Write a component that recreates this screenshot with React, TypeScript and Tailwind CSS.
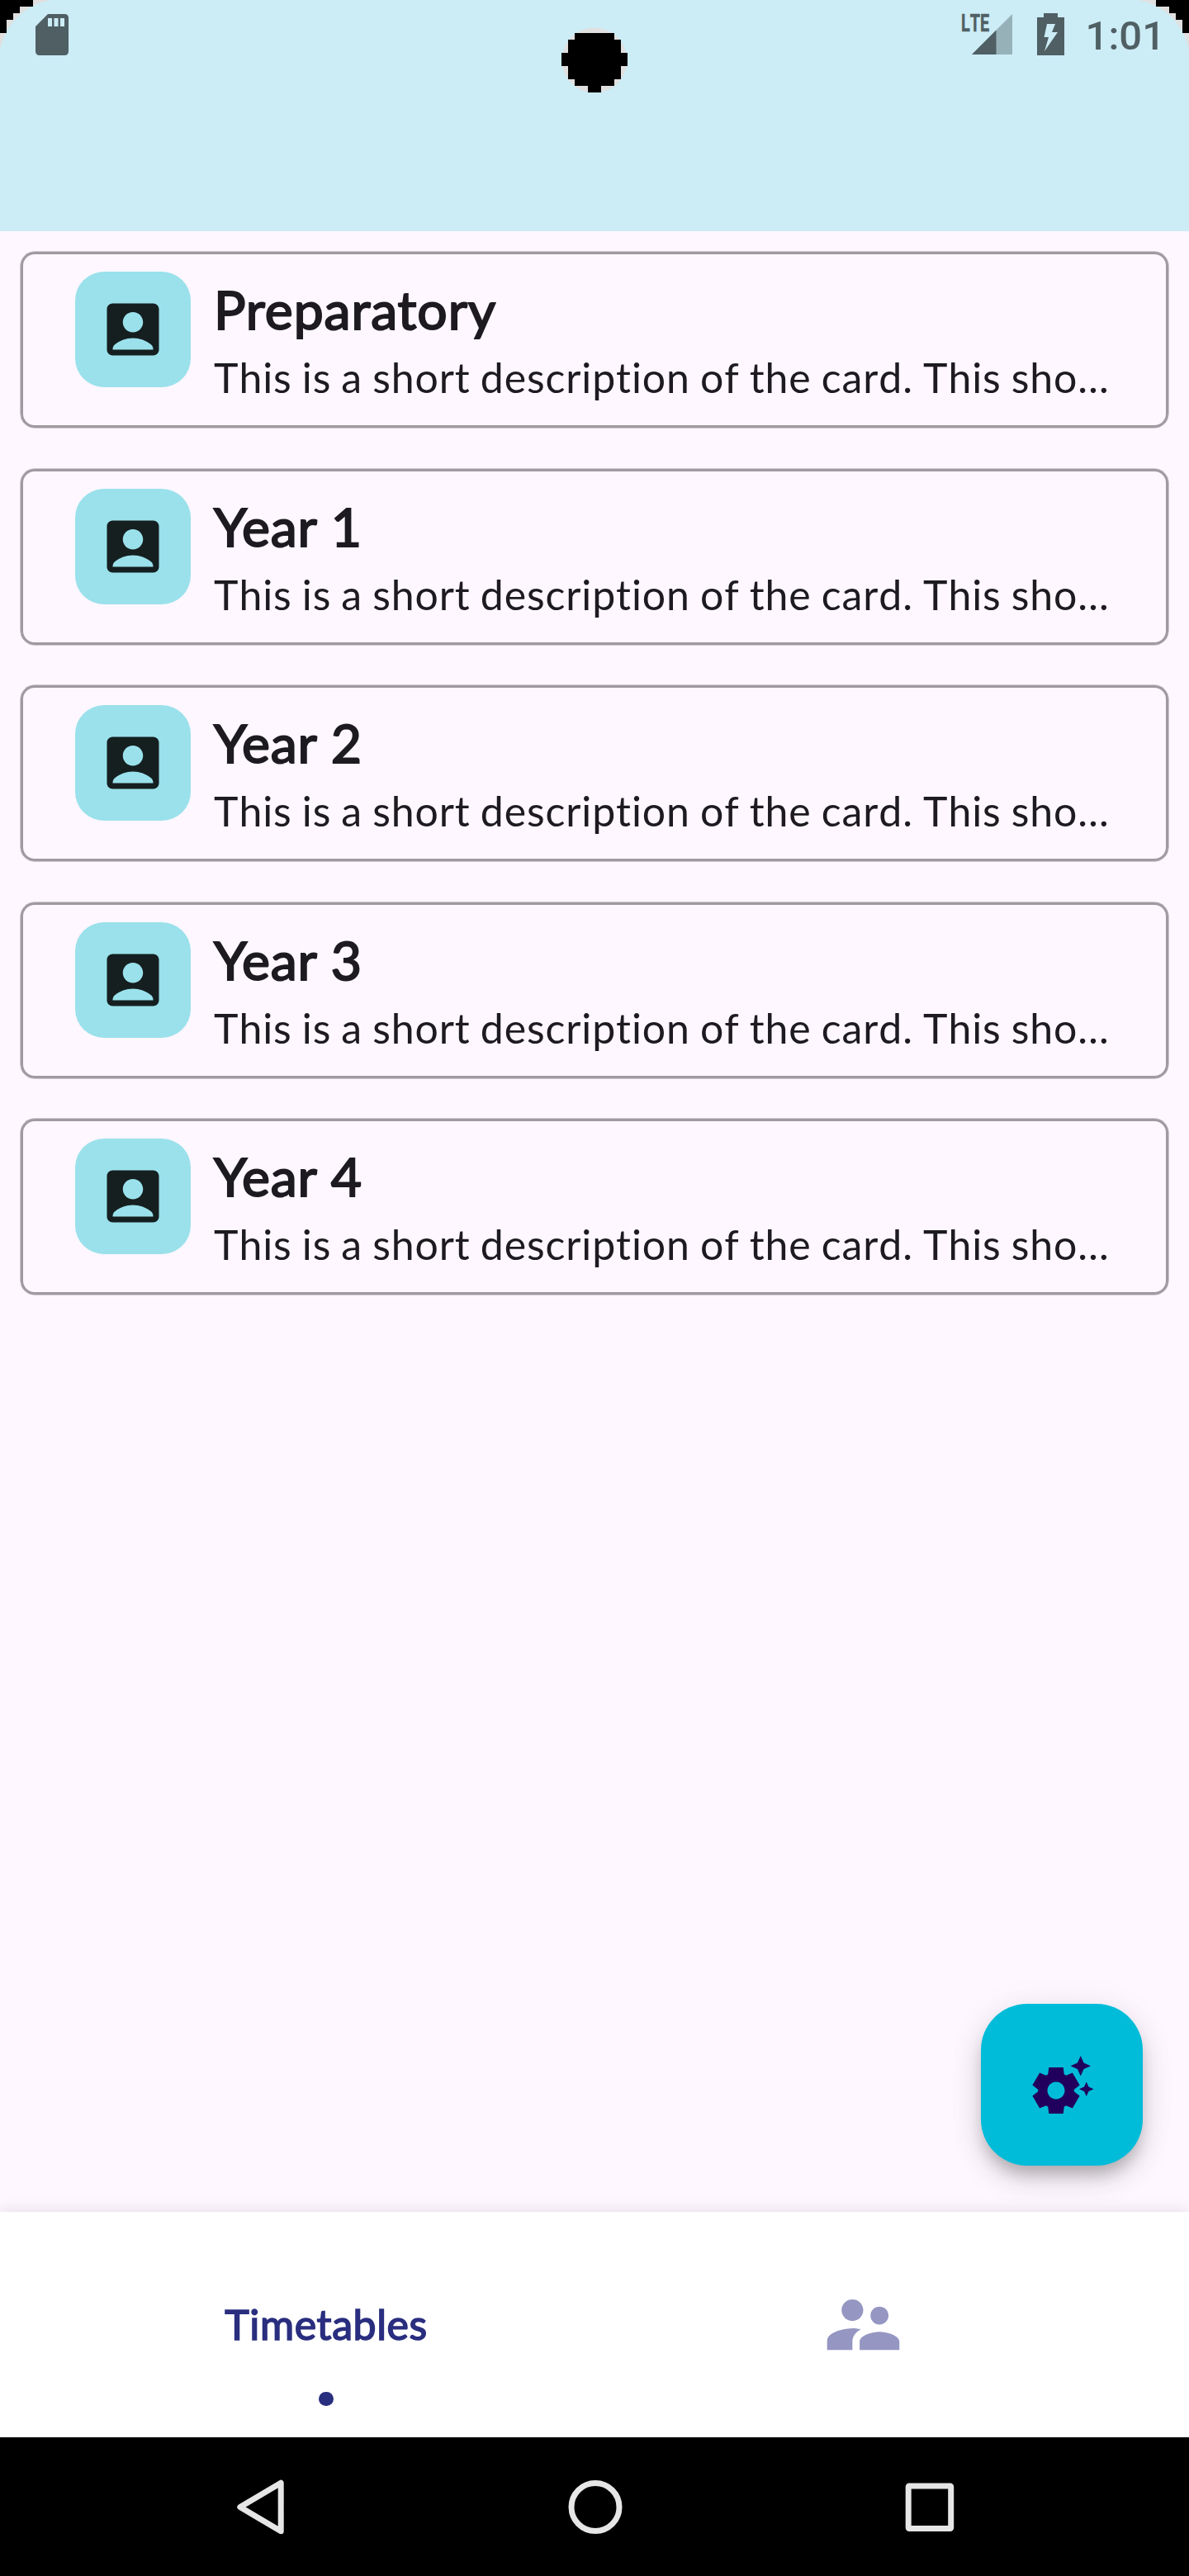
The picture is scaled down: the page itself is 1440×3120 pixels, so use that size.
import { MdAccountBox, MdSettingsSuggest, MdSupervisorAccount } from "react-icons/md";

const ITEMS = ["Preparatory", "Year 1", "Year 2", "Year 3", "Year 4"];
const DESCRIPTION = "This is a short description of the card. This sho…";

function Corner({ className }: { className: string }) {
  return (
    <svg className={className} width="64" height="64" viewBox="0 0 64 64">
      <path d="M0 0H62C30 5 5 30 0 62Z" fill="#e0e0e0" />
      <path d="M0 0H40V8H24V16H16V24H8V40H0Z" fill="#000" shapeRendering="crispEdges" />
    </svg>
  );
}

function StatusBar() {
  return (
    <div className="flex h-[84px] items-start justify-between pl-[43px] pr-[29px]">
      <svg className="mt-[17px]" width="40" height="50" viewBox="0 0 40 50">
        <path
          d="M15 0H35Q40 0 40 5V45Q40 50 35 50H5Q0 50 0 45V15ZM15 5V15H20V5ZM22.500 5V15H27.500V5ZM30 5V15H35V5Z"
          fill="#4f5f63"
          fillRule="evenodd"
        />
      </svg>
      <div className="flex items-start text-[#4f5f63]">
        <div className="relative mt-[17px] h-[49px] w-[61px]">
          <svg className="absolute right-0 top-0" width="49" height="49" viewBox="0 0 49 49">
            <path d="M49 0V49H0Z" fill="#97b1b9" />
            <path d="M29.500 19.500V49H0Z" fill="#4f5f63" />
          </svg>
          <span className="absolute left-[-1px] top-[-4px] origin-left scale-x-[0.66] font-[Roboto] text-[30px] font-bold leading-[30px] [-webkit-text-stroke:0.5px_#4f5f63]">
            LTE
          </span>
        </div>
        <svg className="ml-[30px] mt-4" width="33" height="51" viewBox="0 0 33 51">
          <path
            d="M8 0H25V5H33V51H0V5H8ZM12 13L8.500 29H14L9 46L25 23H18L22 13Z"
            fill="#4f5f63"
            fillRule="evenodd"
          />
        </svg>
        <span className="ml-[26px] mt-[15px] font-[Roboto] text-[49px] font-medium leading-[57px]">
          1:01
        </span>
      </div>
    </div>
  );
}

function Card({ title }: { title: string }) {
  return (
    <div className="flex h-[213px] rounded-[17px] border-[3px] border-[#9f9aa0] px-[63px] pt-[21px] shadow-[0_0_0_0.5px_#9f9aa0]">
      <div className="flex size-[140px] shrink-0 items-center justify-center rounded-[35px] bg-[#9ae1eb]">
        <MdAccountBox className="size-[84px] text-[#151f20]" />
      </div>
      <div className="ml-7 min-w-0 flex-1 whitespace-nowrap tracking-[0.875px]">
        <div className="mt-1.5 text-[64.3px] leading-[80px] [-webkit-text-stroke:2px_#1d1b20] [font-kerning:normal]">
          {title}
        </div>
        <div className="mt-[7px] text-[50px] leading-[70px] [word-spacing:-1.5px]">{DESCRIPTION}</div>
      </div>
    </div>
  );
}

export default function App() {
  return (
    <div className="relative flex h-[3120px] w-[1440px] flex-col overflow-hidden bg-[#fef7ff] font-[Lato,sans-serif] text-[#1d1b20] [font-kerning:none]">
      <header className="h-[280px] bg-[#ccecf6]">
        <StatusBar />
      </header>
      <Corner className="absolute left-0 top-0" />
      <Corner className="absolute right-0 top-0 -scale-x-100" />
      <svg className="absolute left-[680px] top-[32px]" width="80" height="80" viewBox="0 0 80 80">
        <circle cx="40" cy="41" r="39.500" fill="#e0e0e0" />
        <path
          d="M16 8H64V16H72V32H80V48H72V64H64V72H48V80H32V72H16V64H8V48H0V32H8V16H16Z"
          fill="#000"
          shapeRendering="crispEdges"
        />
      </svg>

      <main className="flex flex-1 flex-col gap-[49.5px] px-[25px] pt-[25px]">
        {ITEMS.map((t) => (
          <Card key={t} title={t} />
        ))}
      </main>

      <button className="absolute left-[1188px] top-[2427px] flex size-[196px] items-center justify-center rounded-[56px] bg-[#00bcd9] text-[#21005d] shadow-[0_14px_18px_-4px_rgba(0,0,0,0.2),0_16px_36px_0_rgba(0,0,0,0.13),0_4px_50px_0_rgba(0,0,0,0.05)]">
        <MdSettingsSuggest className="size-[84px]" />
      </button>

      <nav className="flex h-[273px] bg-white px-[70px] shadow-[0_0_18px_rgba(0,0,0,0.13)]">
        <div className="flex flex-1 flex-col items-center text-[#2a2e7f]">
          <span className="mt-[106px] text-[50px] leading-[60px] tracking-[0.58px] [-webkit-text-stroke:1.6px_#2a2e7f]">
            Timetables
          </span>
          <span className="mt-[51.5px] size-[17.5px] rounded-full bg-[#2a2e7f]" />
        </div>
        <div className="flex flex-1 justify-center">
          <MdSupervisorAccount className="mt-[84px] size-[105px] text-[#9596c2]" />
        </div>
      </nav>

      <div className="flex h-[168px] items-center justify-between bg-black pl-[285px] pr-[284px]">
        <svg width="60" height="70" viewBox="0 0 60 70" fill="none" stroke="#e6e6e6" strokeWidth="7">
          <path d="M55.200 6.200V64.800L5.800 35.500Z" strokeLinejoin="round" />
        </svg>
        <svg width="70" height="70" viewBox="0 0 70 70" fill="none" stroke="#e6e6e6" strokeWidth="7">
          <circle cx="35" cy="35.500" r="29" />
        </svg>
        <svg width="60" height="60" viewBox="0 0 60 60" fill="none" stroke="#e6e6e6" strokeWidth="7">
          <rect x="4.200" y="5" width="51.500" height="51.500" rx="1" />
        </svg>
      </div>
    </div>
  );
}
